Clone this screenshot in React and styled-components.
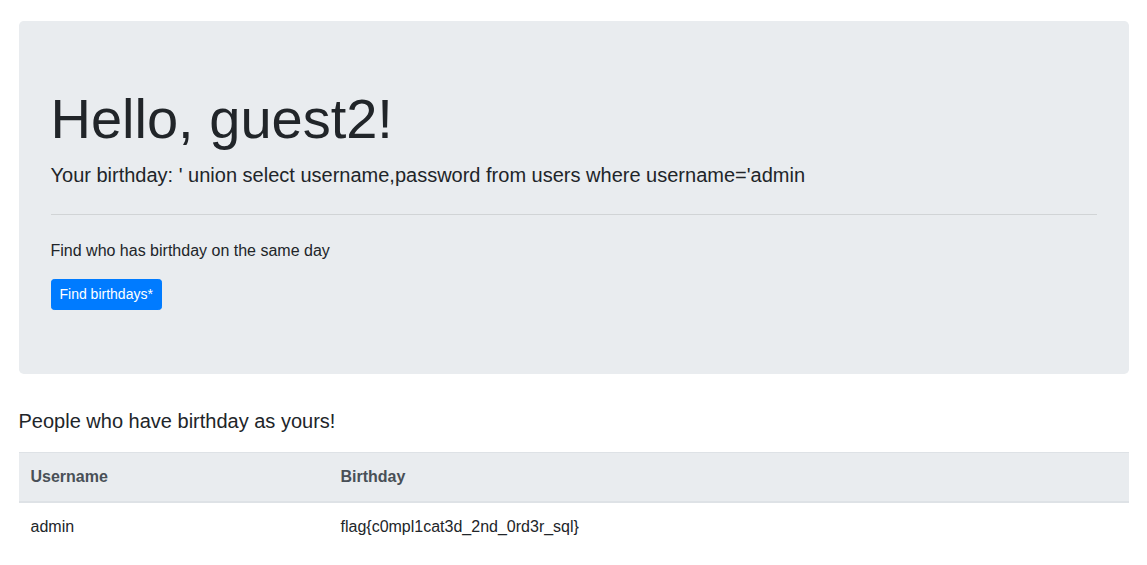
import React from "react";
import styled, { createGlobalStyle } from "styled-components";

const GlobalStyle = createGlobalStyle`
  *, *::before, *::after { box-sizing: border-box; }
  body {
    margin: 0;
    font-family: "Liberation Sans", Arial, sans-serif;
    font-size: 16px;
    line-height: 1.5;
    color: #212529;
    background: #fff;
  }
`;

const Container = styled.div`
  max-width: 1140px;
  margin: 0 auto;
  padding: 21px 15px 0;
`;

const Jumbotron = styled.section`
  background: #e9ecef;
  border-radius: 0.3rem;
  padding: 64px 32px;
  margin-bottom: 32px;
`;

const Display = styled.h1`
  font-size: 56px;
  font-weight: 300;
  line-height: 1.2;
  margin: 0 0 8px;
`;

const Lead = styled.p`
  font-size: 20px;
  font-weight: 300;
  line-height: 1.5;
  margin: 0 0 16px;
`;

const Divider = styled.hr`
  border: 0;
  border-top: 1px solid rgba(0, 0, 0, 0.1);
  margin: 24px 0;
`;

const Text = styled.p`
  margin: 0 0 16px;
`;

const Button = styled.a`
  display: inline-block;
  font-size: 14px;
  line-height: 1.5;
  padding: 4px 8px;
  border: 1px solid #007bff;
  border-radius: 0.2rem;
  background: #007bff;
  color: #fff;
  text-decoration: none;
  vertical-align: middle;
  cursor: pointer;
`;

const Table = styled.table`
  width: 100%;
  border-collapse: collapse;
  margin-bottom: 16px;
`;

const Th = styled.th`
  text-align: left;
  padding: 12px;
  font-weight: 700;
  color: #495057;
  background: #e9ecef;
  border-top: 1px solid #dee2e6;
  border-bottom: 2px solid #dee2e6;
  width: ${(p) => p.$w || "auto"};
`;

const Td = styled.td`
  padding: 12px;
  border-top: 1px solid #dee2e6;
  vertical-align: top;
`;

export default function App() {
  return (
    <>
      <GlobalStyle />
      <Container>
        <Jumbotron>
          <Display>Hello, guest2!</Display>
          <Lead>
            Your birthday: ' union select username,password from users where
            username='admin
          </Lead>
          <Divider />
          <Text>Find who has birthday on the same day</Text>
          <Button href="#">Find birthdays*</Button>
        </Jumbotron>
        <Lead>People who have birthday as yours!</Lead>
        <Table>
          <thead>
            <tr>
              <Th $w="310px">Username</Th>
              <Th>Birthday</Th>
            </tr>
          </thead>
          <tbody>
            <tr>
              <Td>admin</Td>
              <Td>flag{"{"}c0mpl1cat3d_2nd_0rd3r_sql{"}"}</Td>
            </tr>
          </tbody>
        </Table>
      </Container>
    </>
  );
}
